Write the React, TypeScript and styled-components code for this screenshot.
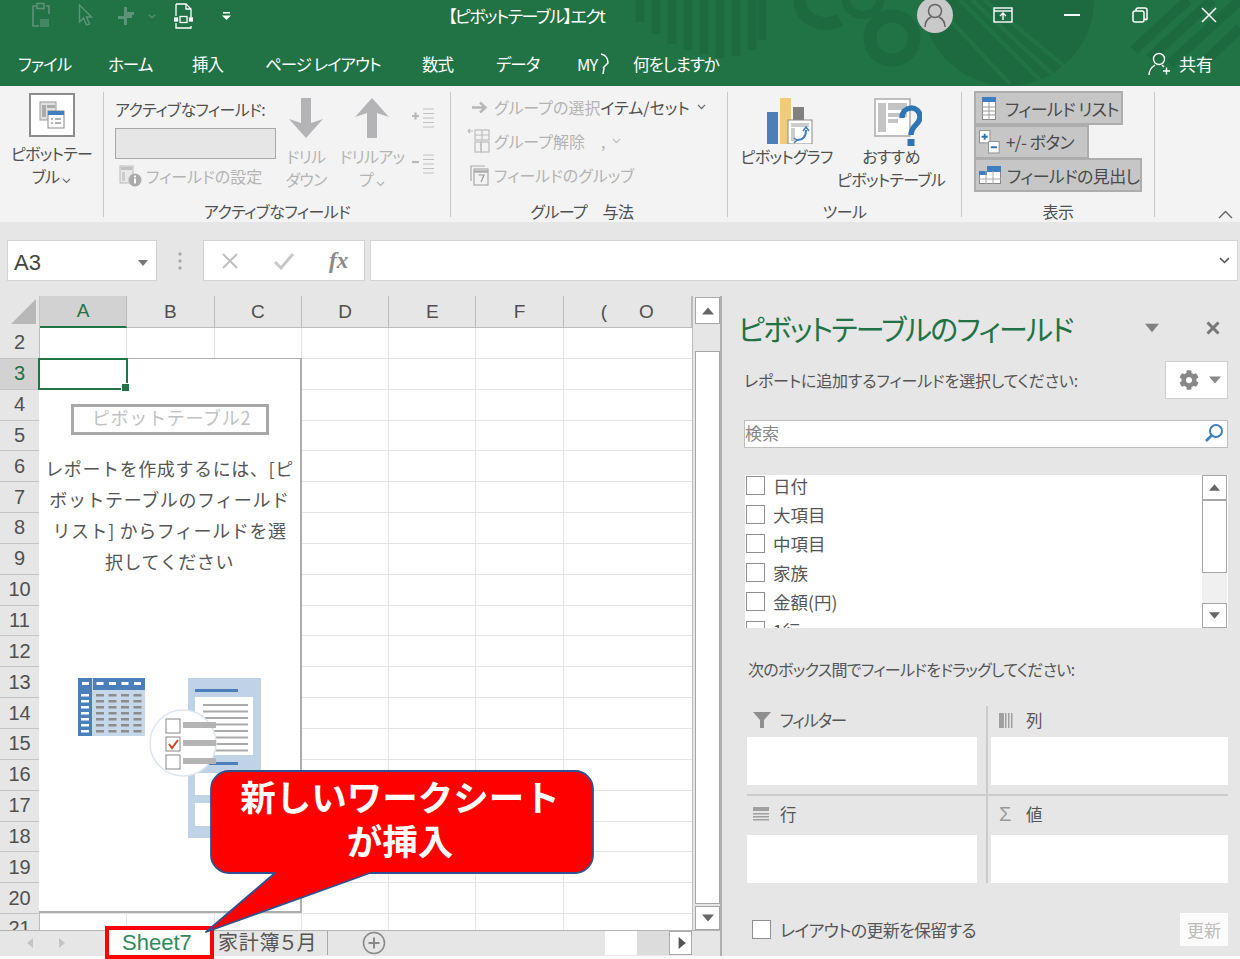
import React from "react";
import styled, { createGlobalStyle } from "styled-components";
import { FaCog } from "react-icons/fa";

const GREEN = "#217346";
const JP = `"Noto Sans CJK JP", "Noto Sans", sans-serif`;
const LATIN = `"Liberation Sans", Arial, sans-serif`;

const Global = createGlobalStyle`
  html, body { margin: 0; padding: 0; background: #fff; height: 959px; }
  body { font-family: ${JP}; font-feature-settings: "palt"; overflow: hidden; }
  #root { height: 959px; }
  * { box-sizing: border-box; }
`;

const Page = styled.div`
  position: relative; width: 1240px; height: 956px; display: flex; flex-direction: column;
  background: #e6e6e6; color: #555;
`;
const Header = styled.header`
  position: relative; height: 86px; background: ${GREEN}; overflow: hidden; flex: none;
`;
const Decor = styled.svg`
  position: absolute; left: 0; top: 0;
`;
const TitleRow = styled.div`
  position: relative; height: 43px; display: grid; grid-template-columns: 448px 469px 36px 1fr;
`;
const Quick = styled.div`
  display: flex; align-items: center; height: 32px; padding-left: 31px;
`;
const QuickSlot = styled.div<{ $w: number }>`
  width: ${p => p.$w}px; flex: none; display: flex; align-items: center;
`;
const Title = styled.div`
  color: #fff; font-size: 17px; letter-spacing: -1.5px; line-height: 32px; white-space: nowrap;
`;
const Avatar = styled.div`
  width: 36px; height: 36px; margin-top: -3px; border-radius: 50%; background: #c9c9c9;
  display: flex; align-items: center; justify-content: center;
`;
const WinControls = styled.div`
  display: flex; height: 30px; padding-left: 16px;
`;
const WinBtn = styled.div`
  width: 68.5px; display: flex; align-items: center; justify-content: center;
`;
const TabRow = styled.nav`
  position: relative; height: 43px; display: flex; align-items: center; padding: 0 0 2px 18px;
`;
const Tab = styled.div<{ $w: number }>`
  width: ${p => p.$w}px; flex: none; color: #fff; font-size: 16.5px; letter-spacing: -1px; line-height: 40px; white-space: nowrap;
  display: flex; align-items: center; gap: 2px;
`;
const Share = styled.div`
  margin-left: auto; margin-right: 27px; display: flex; align-items: center; gap: 9px; color: #fff; font-size: 17px;
`;

const Ribbon = styled.section`
  height: 136px; flex: none; display: flex; background: #f3f3f3; padding: 6px 0 5px;
`;
const Group = styled.div<{ $w: number }>`
  width: ${p => p.$w}px; flex: none; height: 125px; border-right: 1.5px solid #c8c8c8; display: flex; flex-direction: column;
`;
const GroupBody = styled.div`
  height: 109px; flex: none; display: flex;
`;
const GroupLabel = styled.div<{ $pr?: number }>`
  height: 20px; line-height: 20px; flex: none; text-align: center; font-size: 16px; letter-spacing: -0.6px; color: #505050; white-space: nowrap;
  padding-right: ${p => p.$pr ?? 0}px;
`;
const PivotColumn = styled.div`
  width: 100%; display: flex; flex-direction: column; align-items: center; padding-top: 1px;
`;
const PivotIconBox = styled.div`
  width: 46px; height: 44px; background: #fff; border: 2px solid #8c8c8c; display: flex; align-items: center; justify-content: center;
`;
const RibbonText = styled.div<{ $off?: boolean }>`
  font-size: 16px; letter-spacing: -0.7px; line-height: 23px; text-align: center; white-space: nowrap; color: ${p => (p.$off ? "#b4b4b4" : "#505050")};
`;
const PivotName = styled(RibbonText)`
  margin-top: 5px;
`;
const FieldColumn = styled.div`
  width: 161px; margin-left: 11px; flex: none; padding-top: 6px;
`;
const FieldCaption = styled.div`
  font-size: 16px; letter-spacing: -0.6px; line-height: 22px; color: #505050; white-space: nowrap;
`;
const FieldInput = styled.div`
  height: 31px; margin-top: 8px; background: #e6e6e6; border: 1.5px solid #a8a8a8;
`;
const IconRow = styled.div`
  display: flex; align-items: center; gap: 4px; margin: 6px 0 0 4px; height: 22px; color: #b4b4b4; font-size: 16px; white-space: nowrap;
`;
const DrillPair = styled.div`
  display: flex; gap: 6px;
`;
const DrillButton = styled.div`
  width: 60px; flex: none; padding-top: 6px; display: flex; flex-direction: column; align-items: center;
`;
const DrillGap = styled.div`
  height: 7px;
`;
const MiniColumn = styled.div`
  margin-left: 9px; padding-top: 16px; display: flex; flex-direction: column; gap: 25px;
`;
const GroupList = styled.div`
  padding: 4px 0 0 13px; display: flex; flex-direction: column; gap: 12px;
`;
const ListRow = styled.div`
  height: 22px; display: flex; align-items: center; font-size: 16px; color: #b4b4b4; white-space: nowrap;
`;
const ListIcon = styled.div`
  width: 30px; flex: none; display: flex; justify-content: center;
`;
const Dark = styled.span`
  color: #505050;
`;
const Caret = styled.span`
  display: inline-flex; margin-left: 7px;
`;
const ToolButton = styled.div<{ $w: number }>`
  width: ${p => p.$w}px; flex: none; padding-top: 6px; display: flex; flex-direction: column; align-items: center;
`;
const ToolIcon = styled.div<{ $pl: number }>`
  height: 47px; padding-left: ${p => p.$pl}px;
`;
const ToolsBody = styled(GroupBody)`
  padding-left: 6px;
`;
const ShowColumn = styled.div`
  margin-top: -1px; padding-left: 12px; display: flex; flex-direction: column; width: 100%;
`;
const ShowButton = styled.div<{ $w: number }>`
  width: ${p => p.$w}px; height: 34px; margin-bottom: -0.5px; background: #c6c6c6; border: 2px solid #adadad;
  display: flex; align-items: center; gap: 6px; padding-left: 3px; font-size: 17px; letter-spacing: -0.6px; color: #4a4a4a; white-space: nowrap;
`;
const RibbonEnd = styled.div`
  flex: 1; display: flex; justify-content: flex-end; align-items: flex-end; padding-right: 7px; margin-bottom: -2px;
`;

const FormulaBar = styled.div`
  height: 74px; flex: none; display: flex; padding: 18px 2px 0 7px; align-items: flex-start;
`;
const NameBox = styled.div`
  width: 150px; height: 41px; background: #fff; border: 1.5px solid #d4d4d4; display: flex; align-items: center;
  justify-content: space-between; padding: 5px 8px 0 6px; font-family: ${LATIN}; font-size: 22px; color: #444;
`;
const Grip = styled.div`
  width: 46px; height: 41px; display: flex; align-items: center; justify-content: center;
`;
const FormulaBtns = styled.div`
  width: 162px; height: 41px; background: #fff; border: 1.5px solid #d4d4d4; display: flex; align-items: center;
  padding-left: 15px; gap: 32px;
`;
const Fx = styled.span`
  font-family: "Liberation Serif", serif; font-style: italic; font-weight: 700; font-size: 23px; color: #8a8a8a; margin-left: 2px;
`;
const FormulaInput = styled.div`
  flex: 1; height: 41px; margin-left: 5px; background: #fff; border: 1.5px solid #d4d4d4; display: flex; align-items: center;
  justify-content: flex-end; padding-right: 7px;
`;

const Main = styled.div`
  flex: 1; display: flex; min-height: 0;
`;
const SheetArea = styled.div`
  width: 722px; flex: none; display: flex; flex-direction: column; border-right: 2px solid #b0b0b0;
`;
const GridRow = styled.div`
  height: 634px; flex: none; display: flex;
`;
const Grid = styled.div`
  position: relative; width: 693px; flex: none; overflow: hidden; background: #fff; border-right: 1px solid #bbb;
`;
const ColHeaders = styled.div`
  display: flex; height: 32px; background: #e6e6e6;
`;
const Corner = styled.div`
  width: 40px; flex: none; display: flex; align-items: flex-end; justify-content: flex-end; padding: 0 3px 4px 0; border-right: 1px solid #c4c4c4;
`;
const ColHead = styled.div<{ $w: number; $on?: boolean }>`
  width: ${p => p.$w}px; flex: none; display: flex; align-items: center; justify-content: center; gap: 32px;
  font-family: ${LATIN}; font-size: 19px;
  color: ${p => (p.$on ? GREEN : "#505050")}; background: ${p => (p.$on ? "#d2d2d2" : "transparent")};
  border-right: 1px solid #bcbcbc; border-bottom: ${p => (p.$on ? `2px solid ${GREEN}` : "1px solid #bcbcbc")};
`;
const SheetRow = styled.div`
  display: flex; height: 30.85px;
`;
const RowHead = styled.div<{ $on?: boolean }>`
  width: 40px; flex: none; display: flex; align-items: center; justify-content: center;
  font-family: ${LATIN}; font-size: 20px; color: ${p => (p.$on ? GREEN : "#505050")};
  background: ${p => (p.$on ? "#d2d2d2" : "#e6e6e6")};
  border-right: 1px solid #bcbcbc; border-bottom: 1px solid #c4c4c4;
`;
const Cell = styled.div<{ $w: number }>`
  width: ${p => p.$w}px; flex: none; border-right: 1.5px solid #e4e4e4; border-bottom: 1.5px solid #e4e4e4;
`;
const Placeholder = styled.div`
  position: absolute; left: 39px; top: 62px; width: 263px; height: 555px; background: #fff;
  border: 1px solid #aeaeae; border-width: 1px 2px 2px 0; display: flex; flex-direction: column; align-items: center;
`;
const PlaceholderName = styled.div`
  width: 198px; height: 31px; margin-top: 45px; border: 3px solid #a8a8a8; display: flex; align-items: center; justify-content: center;
  color: #c2c2c2; font-size: 18px; letter-spacing: 0.7px; padding: 0 0 5px 4px; font-feature-settings: normal; white-space: nowrap;
`;
const PlaceholderText = styled.div`
  margin-top: 18px; width: 262px; text-align: center; font-size: 18px; line-height: 31px; color: #555;
  letter-spacing: 0.6px; font-feature-settings: normal; white-space: nowrap;
`;
const Illustration = styled.svg`
  margin-top: 101px; align-self: flex-start; margin-left: 39px; flex: none;
`;
const Selection = styled.div`
  position: absolute; left: 38px; top: 62px; width: 90px; height: 32px; border: 2px solid ${GREEN};
  &::after { content: ""; position: absolute; right: -4px; bottom: -4px; width: 7px; height: 7px; background: ${GREEN}; border: 1px solid #fff; }
`;
const VScroll = styled.div`
  flex: 1; display: flex; flex-direction: column; padding: 1px 0 0 2px;
`;
const ScrollBtn = styled.div<{ $h: number }>`
  height: ${p => p.$h}px; flex: none; background: #fff; border: 1.5px solid #a6a6a6; display: flex; align-items: center; justify-content: center;
`;
const ScrollTrack = styled.div`
  flex: 1; display: flex; flex-direction: column; padding: 27px 0 2px;
`;
const ScrollThumb = styled.div`
  flex: 1; background: #fff; border: 1.5px solid #a6a6a6;
`;

const SheetTabs = styled.div`
  height: 26px; flex: 1; display: flex; align-items: flex-start; background: #e6e6e6; border-top: 1.5px solid #b4b4b4; padding-right: 28px;
`;
const TabNav = styled.div`
  width: 105px; height: 24px; flex: none; display: flex; align-items: center; gap: 20px; padding-left: 26px;
`;
const ActiveSheet = styled.div`
  position: relative; z-index: 2; width: 109px; height: 33px; margin-top: -5px; flex: none; background: #fff; border: 4px solid #f00;
  color: #2f8a5a; font-family: ${LATIN}; font-size: 22px; display: flex; align-items: center; justify-content: flex-start; padding-left: 13px;
`;
const OtherSheet = styled.div`
  margin-left: 4px; width: 110px; flex: none; height: 24px; border-right: 1.5px solid #a8a8a8; font-size: 20px; letter-spacing: 0.8px; line-height: 22px; color: #555; white-space: nowrap;
`;
const AddSheet = styled.div`
  margin-left: 34px; display: flex; flex: none;
`;
const HScroll = styled.div`
  margin-left: auto; display: flex; align-items: stretch; height: 24px; width: 87px; flex: none;
`;
const HThumb = styled.div`
  width: 32px; background: #fff;
`;
const HTrack = styled.div`
  width: 32px; background: #dcdcdc;
`;
const HButton = styled.div`
  width: 23px; background: #fff; border: 1.5px solid #aaa; display: flex; align-items: center; justify-content: center;
`;

const Pane = styled.aside`
  flex: 1; padding: 14px 12px 0 22px; display: flex; flex-direction: column; background: #e6e6e6;
`;
const PaneHead = styled.div`
  height: 36px; display: flex; align-items: center;
`;
const PaneTitle = styled.h1`
  margin: 0 0 0 -6px; font-size: 29px; letter-spacing: -1.7px; font-weight: 400; color: ${GREEN}; line-height: 36px; white-space: nowrap;
`;
const PaneActions = styled.div`
  margin-left: auto; display: flex; align-items: center; gap: 47px; padding-right: 8px;
`;
const DescRow = styled.div`
  margin-top: 15px; height: 38px; display: flex; align-items: center; justify-content: space-between;
`;
const PaneText = styled.div`
  font-size: 16px; letter-spacing: -0.15px; color: #555; white-space: nowrap;
`;
const GearButton = styled.div`
  width: 63px; height: 38px; background: #fff; border: 1.5px solid #d0d0d0; display: flex; align-items: center; justify-content: flex-start; gap: 10px; padding-left: 13px; color: #888;
`;
const SearchBox = styled.div`
  margin-top: 21px; height: 28px; flex: none; background: #fff; border: 1.5px solid #c0c0c0; display: flex; align-items: center; justify-content: space-between;
  padding: 0 3px 3px 0; font-size: 17px; color: #888;
`;
const FieldList = styled.div`
  margin: 27px 0 0 1px; height: 153px; flex: none; background: #fff; overflow: hidden; display: flex;
`;
const FieldItems = styled.ul`
  list-style: none; margin: 0; padding: 0; flex: 1; min-width: 0; transform: translateY(-4px);
`;
const FieldItem = styled.li`
  height: 29px; display: flex; align-items: center; gap: 8px; padding-left: 1px; font-size: 17.5px; color: #555; white-space: nowrap;
`;
const Check = styled.span`
  width: 19px; height: 19px; flex: none; background: #fff; border: 1.5px solid #8f8f8f; display: block;
`;
const ListScroll = styled.div`
  width: 25px; margin-right: 1px; flex: none; display: flex; flex-direction: column; background: #f0f0f0;
`;
const ListThumb = styled.div`
  height: 73px; background: #fff; border: 1.5px solid #a6a6a6;
`;
const ListGap = styled.div`
  flex: 1;
`;
const DragLabel = styled(PaneText)`
  margin: 30px 0 0 4px; line-height: 22px; letter-spacing: -0.7px;
`;
const Zones = styled.div`
  margin: 26px 0 0 3px; display: grid; grid-template-columns: 241px 240px; grid-template-rows: 90px 87px;
`;
const Zone = styled.div<{ $right?: boolean; $top?: boolean }>`
  display: flex; flex-direction: column;
  padding-bottom: ${p => (p.$top ? "9px" : "0")};
  padding-right: ${p => (p.$right ? "0" : "9px")};
  padding-left: ${p => (p.$right ? "3px" : "0")};
  border-right: ${p => (p.$right ? "none" : "2px solid #cbcbcb")};
  border-bottom: ${p => (p.$top ? "2px solid #cbcbcb" : "none")};
`;
const ZoneHead = styled.div<{ $right?: boolean }>`
  flex: 1; display: flex; align-items: center; padding: 0 0 3px ${p => (p.$right ? "8px" : "6px")}; font-size: 16.5px; letter-spacing: -1.3px; color: #555; white-space: nowrap;
`;
const ZoneIcon = styled.div`
  width: 27px; flex: none; display: flex; align-items: center; color: #999; font-family: ${LATIN}; font-size: 20px;
`;
const ZoneBox = styled.div`
  height: 48px; flex: none; background: #fff;
`;
const PaneFooter = styled.div`
  margin-top: 30px; height: 33px; display: flex; align-items: center; padding-left: 8px;
`;
const FooterLabel = styled.span`
  margin-left: 9px; font-size: 17px; letter-spacing: -0.7px; color: #555; white-space: nowrap;
`;
const UpdateButton = styled.div`
  margin-left: auto; width: 48px; height: 33px; background: #fbfbfb; color: #bcbcbc; font-size: 17px; display: flex; align-items: center; justify-content: center;
`;

const Callout = styled.div`
  position: absolute; left: 205px; top: 770px; width: 395px; height: 166px; z-index: 3;
`;
const CalloutShape = styled.svg`
  position: absolute; left: 0; top: 0;
`;
const CalloutText = styled.div`
  position: absolute; left: 4px; top: 0; width: 382px; height: 95px; display: flex; flex-direction: column; align-items: center; justify-content: center;
  color: #fff; font-weight: 700; font-size: 35.5px; line-height: 44px; font-feature-settings: normal; white-space: nowrap;
`;

const Chevron = ({ c = "#6e6e6e", s = 9 }: { c?: string; s?: number }) => (
  <svg width={s} height={s * 0.6} viewBox="0 0 10 6"><path d="M1 1l4 4 4-4" fill="none" stroke={c} strokeWidth="1.4" /></svg>
);
const Tri = ({ dir = "down", c = "#777", s = 11 }: { dir?: string; c?: string; s?: number }) => {
  const pts: Record<string, string> = { down: "0,2 10,2 5,8", up: "0,8 10,8 5,2", left: "7,0 7,10 1,5", right: "3,0 3,10 9,5" };
  return <svg width={s} height={s} viewBox="0 0 10 10"><polygon points={pts[dir]} fill={c} /></svg>;
};

const DecorArt = () => (
  <Decor width="1240" height="86" viewBox="0 0 1240 86">
    <g fill="none" stroke="#1e6a40">
      <g strokeWidth="9">
        {[640, 656, 672, 688, 704, 720, 736, 752, 762].map((x, i) => (
          <line key={x} x1={x} y1="0" x2={x} y2={[22, 34, 44, 50, 54, 58, 56, 50, 40][i]} />
        ))}
      </g>
      <path d="M800 0a26 22 0 0 0 40 20" strokeWidth="13" />
      <path d="M846 0a17 15 0 0 0 34 0" strokeWidth="8" />
      <circle cx="892" cy="38" r="22" strokeWidth="13" />
    </g>
    <circle cx="1008" cy="0" r="86" fill="#1e6a40" />
    <g stroke="#217346" strokeWidth="4">
      <line x1="960" y1="0" x2="1040" y2="80" />
      <line x1="972" y1="0" x2="1052" y2="74" />
      <line x1="984" y1="0" x2="1064" y2="66" />
      <line x1="950" y1="20" x2="1010" y2="84" />
    </g>
    <g stroke="#1e6a40" strokeWidth="10">
      <line x1="1188" y1="0" x2="1134" y2="50" />
      <line x1="1212" y1="0" x2="1150" y2="58" />
      <line x1="1240" y1="0" x2="1170" y2="64" />
      <line x1="1240" y1="28" x2="1200" y2="66" />
    </g>
  </Decor>
);

const C = "#5d9479";
const QuickBar = () => (
  <Quick>
    <QuickSlot $w={47}>
      <svg width="22" height="28" viewBox="0 0 22 28" fill="none" stroke={C} strokeWidth="1.6">
        <path d="M5 4H2v20h6M15 4h3v8" /><rect x="6" y="1.5" width="7" height="5" />
        <path d="M9 17h9v8H9z" fill={C} stroke="none" opacity=".6" />
      </svg>
    </QuickSlot>
    <QuickSlot $w={40}>
      <svg width="15" height="24" viewBox="0 0 15 24" fill="none" stroke={C} strokeWidth="1.4"><path d="M1.5 1v17l4-4 3 7 3-1-3-7h5z" /></svg>
    </QuickSlot>
    <QuickSlot $w={30}>
      <svg width="18" height="18" viewBox="0 0 18 18" fill={C}><path d="M6 0h3v5h7v3h-2v3H9v7H6v-6H0V9h6z" /></svg>
    </QuickSlot>
    <QuickSlot $w={26}><Chevron c={C} s={8} /></QuickSlot>
    <QuickSlot $w={48}>
      <svg width="19" height="27" viewBox="0 0 19 27" fill="none" stroke="#fff" strokeWidth="1.3">
        <path d="M2 1h10l5 5v12M2 1v12M2 20v5h15v-2" /><path d="M12 1v5h5" />
        <rect x="6" y="13.5" width="7" height="6" /><rect x="0.5" y="15" width="3" height="3" fill="#fff" /><rect x="15.5" y="15" width="3" height="3" fill="#fff" />
      </svg>
    </QuickSlot>
    <QuickSlot $w={12}>
      <svg width="9" height="9" viewBox="0 0 9 9" fill="#fff"><rect x="1" y="0" width="7" height="1.5" /><polygon points="0,3.5 9,3.5 4.5,8" /></svg>
    </QuickSlot>
  </Quick>
);

const WindowButtons = () => (
  <WinControls>
    <WinBtn>
      <svg width="20" height="16" viewBox="0 0 20 16" fill="none" stroke="#fff" strokeWidth="1.4"><rect x="1" y="1" width="18" height="14" /><path d="M1 4h18" /><path d="M10 13V7M7 9l3-3 3 3" /></svg>
    </WinBtn>
    <WinBtn><svg width="16" height="2" viewBox="0 0 16 2"><rect width="16" height="2" fill="#fff" /></svg></WinBtn>
    <WinBtn>
      <svg width="16" height="16" viewBox="0 0 16 16" fill="none" stroke="#fff" strokeWidth="1.5"><rect x="1" y="4" width="11" height="11" rx="2" /><path d="M4 4V3a2 2 0 0 1 2-2h7a2 2 0 0 1 2 2v8a1 1 0 0 1-2 1h-1" /></svg>
    </WinBtn>
    <WinBtn><svg width="16" height="16" viewBox="0 0 16 16"><path d="M1 1l14 14M15 1L1 15" stroke="#fff" strokeWidth="1.6" /></svg></WinBtn>
  </WinControls>
);

const Bulb = () => (
  <svg width="11" height="24" viewBox="0 0 11 24" fill="none" stroke="#fff" strokeWidth="1.5"><path d="M2 2c5 1 7 5 7 9l-5 5M5 16l-1 6" /></svg>
);

const PivotIcon = () => (
  <svg width="26" height="28" viewBox="0 0 26 28">
    <rect x="1" y="1" width="16" height="18" fill="#e0e0e0" stroke="#9a9a9a" />
    <rect x="3" y="4" width="4" height="12" fill="#aaa" /><rect x="8" y="4" width="8" height="3" fill="#aaa" />
    <rect x="9" y="10" width="16" height="17" fill="#fff" stroke="#8a8a8a" /><rect x="9" y="10" width="16" height="4" fill="#3f7fbf" />
    <path d="M12 18h2M16 18h6M12 22h2M16 22h6" stroke="#666" />
  </svg>
);
const DrillArrow = ({ up }: { up?: boolean }) => (
  <svg width="34" height="40" viewBox="0 0 34 40">
    <polygon points={up ? "17,0 34,19 22,15 22,40 12,40 12,15 0,19" : "17,40 34,21 22,25 22,0 12,0 12,25 0,21"} fill="#b4b4b6" />
  </svg>
);
const Mini = ({ minus }: { minus?: boolean }) => (
  <svg width="24" height="21" viewBox="0 0 24 21" fill="none" stroke="#c0c0c0" strokeWidth="1">
    <path d="M12 1h11M12 5.5h11M12 10h11M12 14.5h11M12 19h11" />
    <path d={minus ? "M1 8h7" : "M1 8h7M4.5 4.5v7"} strokeWidth="2.2" stroke="#b8b8b8" />
  </svg>
);
const SettingsIcon = () => (
  <svg width="23" height="22" viewBox="0 0 23 22">
    <rect x="1" y="1" width="13" height="17" fill="#e8e8e8" stroke="#bbb" /><rect x="2" y="2" width="11" height="3" fill="#c0c0c0" /><rect x="3" y="7" width="3" height="9" fill="#ccc" />
    <circle cx="16" cy="15" r="6.5" fill="#aaa" /><rect x="15" y="13.5" width="2" height="5" fill="#fff" /><rect x="15" y="10.5" width="2" height="2" fill="#fff" />
  </svg>
);
const ArrowRight = () => (
  <svg width="17" height="13" viewBox="0 0 17 13"><path d="M1 6.5h13M9 1.5l5.5 5-5.5 5" fill="none" stroke="#b8b8b8" strokeWidth="2.4" /></svg>
);
const UngroupIcon = () => (
  <svg width="24" height="26" viewBox="0 0 24 26" fill="none" stroke="#bbb" strokeWidth="1.2">
    <path d="M1 3h5M1 3l2-2M1 3l2 2" /><rect x="8" y="2" width="14" height="10" /><rect x="8" y="14" width="6" height="10" /><rect x="14" y="14" width="8" height="10" /><path d="M8 7h14M15 2v10" />
  </svg>
);
const FieldGroupIcon = () => (
  <svg width="19" height="21" viewBox="0 0 19 21" fill="none" stroke="#aaa" strokeWidth="1.2">
    <path d="M1 16V1h14" /><rect x="4" y="4" width="14" height="16" fill="#f3f3f3" /><path d="M4 6.5h14" strokeWidth="2.4" /><path d="M8.5 10h5.5l-3 7" stroke="#999" />
  </svg>
);
const ChartIcon = () => (
  <svg width="46" height="46" viewBox="0 0 46 46">
    <rect x="0" y="14" width="11" height="32" fill="#4a7fb9" /><rect x="13" y="0" width="11" height="46" fill="#f2cb77" /><rect x="26" y="9" width="11" height="37" fill="#808080" />
    <rect x="21" y="22" width="24" height="24" fill="#fff" stroke="#8a8a8a" /><rect x="24" y="25" width="18" height="4" fill="#ccc" /><rect x="24" y="30" width="4" height="13" fill="#ccc" />
    <path d="M30 42c6 0 9-4 9-10" fill="none" stroke="#3f7fbf" strokeWidth="2" /><path d="M36 33l3-4 3 4M27 40l3 2-3 3" fill="none" stroke="#3f7fbf" strokeWidth="1.5" />
  </svg>
);
const RecommendIcon = () => (
  <svg width="48" height="50" viewBox="0 0 48 50">
    <rect x="1" y="1" width="35" height="37" fill="#fff" stroke="#aaa" strokeWidth="1.5" />
    <rect x="4" y="5" width="8" height="29" fill="#c4c4c4" /><rect x="14" y="5" width="19" height="7" fill="#c4c4c4" /><rect x="14" y="15" width="19" height="4" fill="#c4c4c4" /><rect x="14" y="21" width="10" height="4" fill="#c4c4c4" />
    <path d="M28 20c0-13 18-13 18-1 0 8-9 8-9 18" fill="none" stroke="#2e75b6" strokeWidth="5.5" />
    <rect x="33.5" y="41" width="7" height="7" fill="#2e75b6" />
  </svg>
);
const FieldListIcon = () => (
  <svg width="20" height="23" viewBox="0 0 20 23"><rect x="3.5" y="0.5" width="13" height="22" fill="#fff" stroke="#888" /><rect x="3" y="0" width="14" height="5" fill="#3f7fbf" /><path d="M3 10h14M3 14h14M3 18h14M10 5v18" stroke="#999" /></svg>
);
const PlusMinusIcon = () => (
  <svg width="21" height="24" viewBox="0 0 24 27">
    <rect x="0.5" y="0.5" width="12" height="14" fill="#fff" stroke="#888" /><path d="M3 7.5h7M6.5 4v7" stroke="#2e75b6" strokeWidth="2.2" />
    <rect x="11" y="13" width="12" height="13" fill="#fff" stroke="#888" /><path d="M13.5 19.5h7" stroke="#2e75b6" strokeWidth="2.2" />
  </svg>
);
const HeaderIcon = () => (
  <svg width="22" height="18" viewBox="0 0 22 18">
    <rect x="0.5" y="5.5" width="21" height="12" fill="#fff" stroke="#888" /><rect x="0" y="5" width="8" height="4" fill="#3f7fbf" /><rect x="8" y="0" width="14" height="6" fill="#3f7fbf" /><path d="M0 13h22M7 5v13M14 5v13" stroke="#aaa" />
  </svg>
);

const TableArt = () => (
  <Illustration width="184" height="160" viewBox="0 0 184 160">
    <rect x="0" y="0" width="67" height="58" fill="#c7d7ea" />
    <rect x="0" y="0" width="14" height="58" fill="#4a7fb9" /><rect x="15" y="0" width="52" height="12" fill="#4a7fb9" />
    {[0, 1, 2, 3, 4].map(i => <rect key={`t${i}`} x={4 + (i ? 14.5 + (i - 1) * 12.5 : 0)} y="4" width="7" height="3" fill="#fff" />)}
    {[0, 1, 2, 3, 4, 5, 6].map(r => (
      <g key={r}>
        <rect x="3" y={16 + r * 6} width="8" height="2.5" fill="#fff" />
        {[0, 1, 2, 3].map(c => <rect key={c} x={18 + c * 12.5} y={16 + r * 6} width="8" height="2.5" fill="#8c8c8c" />)}
      </g>
    ))}
    <rect x="110" y="0" width="73" height="160" fill="#c0d2e6" />
    <rect x="117" y="11" width="43" height="3" fill="#4a7fb9" />
    <rect x="117" y="19" width="58" height="58" fill="#fff" />
    {[0, 1, 2, 3, 4, 5, 6, 7].map(i => <rect key={i} x="125" y={26 + i * 6.5} width="45" height="2" fill="#aaa" />)}
    <rect x="117" y="84" width="43" height="3" fill="#4a7fb9" />
    <rect x="117" y="95" width="58" height="22" fill="#fff" />
    <rect x="117" y="125" width="58" height="23" fill="#fff" />
    <circle cx="105" cy="65" r="33" fill="#fff" stroke="#dde6f0" strokeWidth="1.5" />
    {[0, 1, 2].map(i => (
      <g key={`c${i}`}>
        <rect x="88" y={41 + i * 18} width="14" height="14" fill="#fff" stroke="#888" />
        <rect x="105" y={44 + i * 18} width="33" height="6" fill="#b4b4b4" />
      </g>
    ))}
    <path d="M91 66l3 4 6-8" fill="none" stroke="#d0452a" strokeWidth="2" />
  </Illustration>
);

const colWidths = [87.3, 87.3, 87.3, 87.3, 87.3, 87.3, 129];
const colNames = ["A", "B", "C", "D", "E", "F"];
const rows = Array.from({ length: 20 }, (_, i) => i + 2);
const fields = ["日付", "大項目", "中項目", "家族", "金額(円)", "1行"];

export default function App() {
  return (
    <Page>
      <Global />
      <Header>
        <DecorArt />
        <TitleRow>
          <QuickBar />
          <Title>【ピボットテーブル】エクt</Title>
          <Avatar>
            <svg width="24" height="26" viewBox="0 0 24 26" fill="none" stroke="#666" strokeWidth="1.5"><circle cx="12" cy="9" r="6.5" /><path d="M2 25c0-6 4-9 6-10M22 25c0-6-4-9-6-10" /></svg>
          </Avatar>
          <WindowButtons />
        </TitleRow>
        <TabRow>
          <Tab $w={90}>ファイル</Tab>
          <Tab $w={84}>ホーム</Tab>
          <Tab $w={73}>挿入</Tab>
          <Tab $w={157}>ページ レイアウト</Tab>
          <Tab $w={74}>数式</Tab>
          <Tab $w={81}>データ</Tab>
          <Tab $w={56}>MY<Bulb /></Tab>
          <Tab $w={110}>何をしますか</Tab>
          <Share>
            <svg width="22" height="24" viewBox="0 0 22 24" fill="none" stroke="#fff" strokeWidth="1.4"><circle cx="11" cy="7" r="5.5" /><path d="M1 23c0-5 3-8 6-10M14 13l2 2M15 19h7M18.5 15.5v7" /></svg>
            共有
          </Share>
        </TabRow>
      </Header>

      <Ribbon>
        <Group $w={104}>
          <GroupBody>
            <PivotColumn>
              <PivotIconBox><PivotIcon /></PivotIconBox>
              <PivotName>ピボットテー</PivotName>
              <RibbonText>ブル <Chevron /></RibbonText>
            </PivotColumn>
          </GroupBody>
        </Group>
        <Group $w={347}>
          <GroupBody>
            <FieldColumn>
              <FieldCaption>アクティブなフィールド:</FieldCaption>
              <FieldInput />
              <IconRow><SettingsIcon />フィールドの設定</IconRow>
            </FieldColumn>
            <DrillPair>
              <DrillButton>
                <DrillArrow />
                <DrillGap />
                <RibbonText $off>ドリル</RibbonText>
                <RibbonText $off>ダウン</RibbonText>
              </DrillButton>
              <DrillButton>
                <DrillArrow up />
                <DrillGap />
                <RibbonText $off>ドリルアッ</RibbonText>
                <RibbonText $off>プ <Chevron c="#b4b4b4" /></RibbonText>
              </DrillButton>
            </DrillPair>
            <MiniColumn>
              <Mini />
              <Mini minus />
            </MiniColumn>
          </GroupBody>
          <GroupLabel>アクティブなフィールド</GroupLabel>
        </Group>
        <Group $w={277}>
          <GroupBody>
            <GroupList>
              <ListRow><ListIcon><ArrowRight /></ListIcon>グループの選択<Dark>イテム/セット</Dark><Caret><Chevron /></Caret></ListRow>
              <ListRow><ListIcon><UngroupIcon /></ListIcon>グループ解除　, <Caret><Chevron c="#c0c0c0" /></Caret></ListRow>
              <ListRow><ListIcon><FieldGroupIcon /></ListIcon>フィールドのグルッブ</ListRow>
            </GroupList>
          </GroupBody>
          <GroupLabel $pr={14}>グループ　与法</GroupLabel>
        </Group>
        <Group $w={234}>
          <ToolsBody>
            <ToolButton $w={105}>
              <ToolIcon $pl={6}><ChartIcon /></ToolIcon>
              <RibbonText>ピボットグラフ</RibbonText>
            </ToolButton>
            <ToolButton $w={104}>
              <ToolIcon $pl={14}><RecommendIcon /></ToolIcon>
              <RibbonText>おすすめ</RibbonText>
              <RibbonText>ピボットテーブル</RibbonText>
            </ToolButton>
          </ToolsBody>
          <GroupLabel>ツール</GroupLabel>
        </Group>
        <Group $w={193}>
          <GroupBody>
            <ShowColumn>
              <ShowButton $w={149}><FieldListIcon />フィールド リスト</ShowButton>
              <ShowButton $w={115}><PlusMinusIcon />+/- ボタン</ShowButton>
              <ShowButton $w={168}><HeaderIcon />フィールドの見出し</ShowButton>
            </ShowColumn>
          </GroupBody>
          <GroupLabel>表示</GroupLabel>
        </Group>
        <RibbonEnd>
          <svg width="15" height="9" viewBox="0 0 15 9"><path d="M1 8l6.5-6.5L14 8" fill="none" stroke="#666" strokeWidth="1.4" /></svg>
        </RibbonEnd>
      </Ribbon>

      <FormulaBar>
        <NameBox>A3<Tri c="#777" s={10} /></NameBox>
        <Grip>
          <svg width="4" height="18" viewBox="0 0 4 18" fill="#aaa"><circle cx="2" cy="2" r="1.7" /><circle cx="2" cy="9" r="1.7" /><circle cx="2" cy="16" r="1.7" /></svg>
        </Grip>
        <FormulaBtns>
          <svg width="22" height="18" viewBox="0 0 18 18"><path d="M2 2l14 14M16 2L2 16" stroke="#c0c0c0" strokeWidth="2" /></svg>
          <svg width="22" height="18" viewBox="0 0 22 18"><path d="M2 10l6 6L20 2" fill="none" stroke="#c8c8c8" strokeWidth="3" /></svg>
          <Fx>fx</Fx>
        </FormulaBtns>
        <FormulaInput><Chevron c="#555" s={11} /></FormulaInput>
      </FormulaBar>

      <Main>
        <SheetArea>
          <GridRow>
            <Grid>
              <ColHeaders>
                <Corner><svg width="25" height="25" viewBox="0 0 25 25"><polygon points="25,0 25,25 0,25" fill="#b8b8b8" /></svg></Corner>
                {colNames.map((n, i) => <ColHead key={n} $w={colWidths[i]} $on={n === "A"}>{n}</ColHead>)}
                <ColHead $w={colWidths[6] - 1}><span>(</span><span>O</span></ColHead>
              </ColHeaders>
              {rows.map(r => (
                <SheetRow key={r}>
                  <RowHead $on={r === 3}>{r}</RowHead>
                  {colWidths.map((w, i) => <Cell key={i} $w={w} />)}
                </SheetRow>
              ))}
              <Placeholder>
                <PlaceholderName>ピボットテーブル2</PlaceholderName>
                <PlaceholderText>
                  レポートを作成するには、[ピ<br />ボットテーブルのフィールド<br />リスト] からフィールドを選<br />択してください
                </PlaceholderText>
                <TableArt />
              </Placeholder>
              <Selection />
            </Grid>
            <VScroll>
              <ScrollBtn $h={27}><Tri dir="up" c="#666" s={12} /></ScrollBtn>
              <ScrollTrack><ScrollThumb /></ScrollTrack>
              <ScrollBtn $h={24}><Tri c="#666" s={12} /></ScrollBtn>
            </VScroll>
          </GridRow>
          <SheetTabs>
            <TabNav>
              <Tri dir="left" c="#c4c4c4" s={10} />
              <Tri dir="right" c="#c4c4c4" s={10} />
            </TabNav>
            <ActiveSheet>Sheet7</ActiveSheet>
            <OtherSheet>家計簿５月</OtherSheet>
            <AddSheet>
              <svg width="24" height="24" viewBox="0 0 24 24" fill="none" stroke="#888" strokeWidth="1.5"><circle cx="12" cy="12" r="10.5" /><path d="M12 6.5v11M6.5 12h11" strokeWidth="2" /></svg>
            </AddSheet>
            <HScroll>
              <HThumb />
              <HTrack />
              <HButton><Tri dir="right" c="#555" s={12} /></HButton>
            </HScroll>
          </SheetTabs>
        </SheetArea>

        <Pane>
          <PaneHead>
            <PaneTitle>ピボットテーブルのフィールド</PaneTitle>
            <PaneActions>
              <Tri c="#808080" s={14} />
              <svg width="14" height="14" viewBox="0 0 14 14"><path d="M1.5 1.5l11 11M12.5 1.5l-11 11" stroke="#777" strokeWidth="3" /></svg>
            </PaneActions>
          </PaneHead>
          <DescRow>
            <PaneText>レポートに追加するフィールドを選択してください:</PaneText>
            <GearButton><FaCog size={20} /><Tri c="#888" s={12} /></GearButton>
          </DescRow>
          <SearchBox>
            検索
            <svg width="20" height="20" viewBox="0 0 20 20" fill="none" stroke="#3f7fbf" strokeWidth="2"><circle cx="12" cy="8" r="6" /><path d="M7.5 12.5L2 18" strokeWidth="2.6" /></svg>
          </SearchBox>
          <FieldList>
            <FieldItems>
              {fields.map(f => <FieldItem key={f}><Check />{f}</FieldItem>)}
            </FieldItems>
            <ListScroll>
              <ScrollBtn $h={25}><Tri dir="up" c="#666" s={11} /></ScrollBtn>
              <ListThumb />
              <ListGap />
              <ScrollBtn $h={25}><Tri c="#666" s={11} /></ScrollBtn>
            </ListScroll>
          </FieldList>
          <DragLabel>次のボックス間でフィールドをドラッグしてください:</DragLabel>
          <Zones>
            <Zone $top>
              <ZoneHead>
                <ZoneIcon><svg width="18" height="18" viewBox="0 0 18 18" fill="#8f8f8f"><polygon points="0,1 18,1 11,9 11,17 7,17 7,9" /></svg></ZoneIcon>
                フィルター
              </ZoneHead>
              <ZoneBox />
            </Zone>
            <Zone $top $right>
              <ZoneHead $right>
                <ZoneIcon><svg width="15" height="15" viewBox="0 0 15 15" fill="#a0a0a0"><rect width="5" height="15" /><rect x="6" width="1.5" height="15" /><rect x="9" width="1.5" height="15" /><rect x="12" width="1.5" height="15" /></svg></ZoneIcon>
                列
              </ZoneHead>
              <ZoneBox />
            </Zone>
            <Zone>
              <ZoneHead>
                <ZoneIcon><svg width="16" height="14" viewBox="0 0 16 14" fill="#a0a0a0"><rect width="16" height="4" /><rect y="6" width="16" height="1.5" /><rect y="9" width="16" height="1.5" /><rect y="12" width="16" height="1.5" /></svg></ZoneIcon>
                行
              </ZoneHead>
              <ZoneBox />
            </Zone>
            <Zone $right>
              <ZoneHead $right>
                <ZoneIcon>Σ</ZoneIcon>
                値
              </ZoneHead>
              <ZoneBox />
            </Zone>
          </Zones>
          <PaneFooter>
            <Check />
            <FooterLabel>レイアウトの更新を保留する</FooterLabel>
            <UpdateButton>更新</UpdateButton>
          </PaneFooter>
        </Pane>
      </Main>

      <Callout>
        <CalloutShape width="395" height="166" viewBox="0 0 395 166">
          <path d="M24 1h346a18 18 0 0 1 18 18v66a18 18 0 0 1-18 18H165L1 162 70 103H24a18 18 0 0 1-18-18V19a18 18 0 0 1 18-18z" fill="#f00" stroke="#2f528f" strokeWidth="1.8" strokeLinejoin="round" />
        </CalloutShape>
        <CalloutText>
          <span>新しいワークシート</span>
          <span>が挿入</span>
        </CalloutText>
      </Callout>
    </Page>
  );
}
